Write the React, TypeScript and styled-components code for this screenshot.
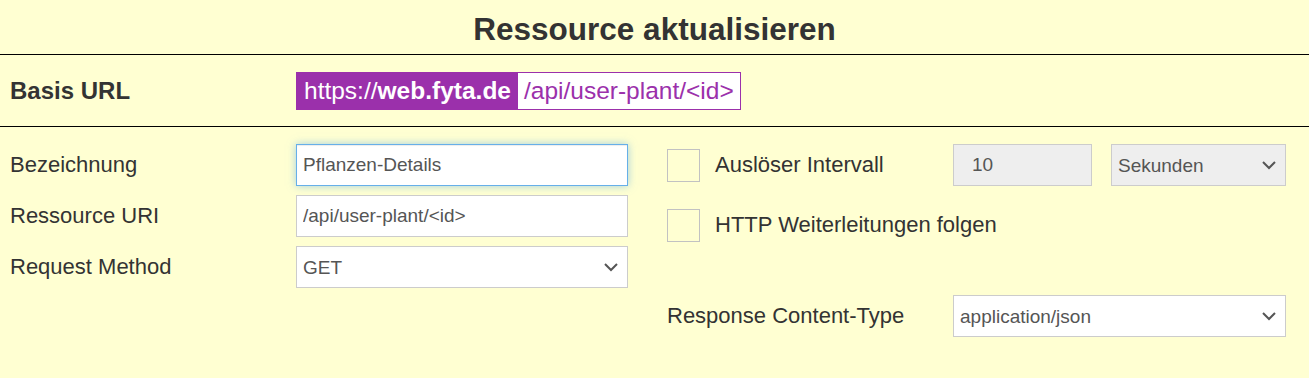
import styled, { createGlobalStyle } from "styled-components";

const GlobalStyle = createGlobalStyle`
  body {
    margin: 0;
    background: #ffffd2;
    font-family: "Liberation Sans", Arial, sans-serif;
    color: #333;
  }
`;

const Page = styled.div`
  min-height: 100vh;
  background: #ffffd2;
`;

const Title = styled.h1`
  margin: 0;
  height: 55px;
  box-sizing: border-box;
  padding-top: 4px;
  display: flex;
  align-items: center;
  justify-content: center;
  font-size: 31.5px;
  font-weight: bold;
  color: #333;
  border-bottom: 1px solid #000;
`;

const BaseRow = styled.div`
  height: 72px;
  box-sizing: border-box;
  display: flex;
  align-items: center;
  padding-left: 10px;
  border-bottom: 1px solid #000;
`;

const BaseLabel = styled.div`
  width: 286px;
  font-size: 24px;
  font-weight: bold;
  color: #333;
`;

const BaseUrl = styled.div`
  display: flex;
  height: 38px;
  font-size: 24.5px;
`;

const Host = styled.div`
  display: flex;
  align-items: center;
  padding: 0 6px 0 8px;
  background: #9b30ab;
  color: #fff;

  b {
    font-weight: bold;
  }
`;

const Path = styled.div`
  display: flex;
  align-items: center;
  padding: 0 6px 0 6px;
  background: #fff;
  color: #9b30ab;
  border: 1px solid #9b30ab;
`;

const Form = styled.div`
  display: grid;
  grid-template-columns: 657px 1fr;
  padding-top: 17px;
`;

const Column = styled.div`
  padding-left: 10px;
  display: flex;
  flex-direction: column;
`;

const FieldRow = styled.div<{ $gap?: number }>`
  display: flex;
  align-items: center;
  height: 42px;
  margin-top: ${(p) => p.$gap ?? 0}px;
`;

const Label = styled.div<{ $width?: number }>`
  width: ${(p) => p.$width ?? 286}px;
  flex-shrink: 0;
  font-size: 22px;
  color: #333;
`;

const TextInput = styled.input<{ $width: number; $focused?: boolean; $grey?: boolean }>`
  width: ${(p) => p.$width}px;
  height: 42px;
  box-sizing: border-box;
  margin: 0;
  padding: 0 ${(p) => (p.$grey ? 18 : 6)}px;
  font-family: "Liberation Sans", Arial, sans-serif;
  font-size: 19px;
  color: #555;
  background: ${(p) => (p.$grey ? "#eeeeee" : "#fff")};
  border: 1px solid ${(p) => (p.$focused ? "#66afe9" : "#cccccc")};
  box-shadow: ${(p) =>
    p.$focused ? "inset 0 1px 1px rgba(0,0,0,.075), 0 0 8px rgba(102,175,233,.6)" : "none"};
  outline: none;
`;

const SelectWrap = styled.div<{ $width: number; $grey?: boolean; $ml?: number }>`
  position: relative;
  width: ${(p) => p.$width}px;
  height: 42px;
  margin-left: ${(p) => p.$ml ?? 0}px;
  box-sizing: border-box;
  border: 1px solid #cccccc;
  background: ${(p) => (p.$grey ? "#eeeeee" : "#fff")};
`;

const Select = styled.select`
  appearance: none;
  width: 100%;
  height: 100%;
  border: none;
  background: transparent;
  margin: 0;
  padding: 0 30px 0 6px;
  font-family: "Liberation Sans", Arial, sans-serif;
  font-size: 19px;
  color: #555;
  outline: none;
`;

const Chevron = styled.svg`
  position: absolute;
  right: 8px;
  top: 15px;
  pointer-events: none;
`;

const Checkbox = styled.div`
  width: 33px;
  height: 33px;
  box-sizing: border-box;
  border: 1px solid #c2c2c2;
  margin-right: 15px;
  flex-shrink: 0;
`;

function Arrow() {
  return (
    <Chevron width="16" height="10" viewBox="0 0 16 10">
      <polyline points="2,2 8,8 14,2" fill="none" stroke="#555" strokeWidth="2" />
    </Chevron>
  );
}

function Dropdown({
  width,
  value,
  grey,
  ml,
}: {
  width: number;
  value: string;
  grey?: boolean;
  ml?: number;
}) {
  return (
    <SelectWrap $width={width} $grey={grey} $ml={ml}>
      <Select defaultValue={value}>
        <option>{value}</option>
      </Select>
      <Arrow />
    </SelectWrap>
  );
}

export default function App() {
  return (
    <Page>
      <GlobalStyle />
      <Title>Ressource aktualisieren</Title>
      <BaseRow>
        <BaseLabel>Basis URL</BaseLabel>
        <BaseUrl>
          <Host>
            https://<b>web.fyta.de</b>
          </Host>
          <Path>/api/user-plant/&lt;id&gt;</Path>
        </BaseUrl>
      </BaseRow>
      <Form>
        <Column>
          <FieldRow>
            <Label>Bezeichnung</Label>
            <TextInput $width={332} $focused defaultValue="Pflanzen-Details" />
          </FieldRow>
          <FieldRow $gap={9}>
            <Label>Ressource URI</Label>
            <TextInput $width={332} defaultValue="/api/user-plant/<id>" />
          </FieldRow>
          <FieldRow $gap={9}>
            <Label>Request Method</Label>
            <Dropdown width={332} value="GET" />
          </FieldRow>
        </Column>
        <Column>
          <FieldRow>
            <Checkbox />
            <Label $width={238}>Auslöser Intervall</Label>
            <TextInput $width={139} $grey defaultValue="10" />
            <Dropdown width={175} value="Sekunden" grey ml={19} />
          </FieldRow>
          <FieldRow $gap={18}>
            <Checkbox />
            <Label $width={400}>HTTP Weiterleitungen folgen</Label>
          </FieldRow>
          <FieldRow $gap={49}>
            <Label>Response Content-Type</Label>
            <Dropdown width={333} value="application/json" />
          </FieldRow>
        </Column>
      </Form>
    </Page>
  );
}
